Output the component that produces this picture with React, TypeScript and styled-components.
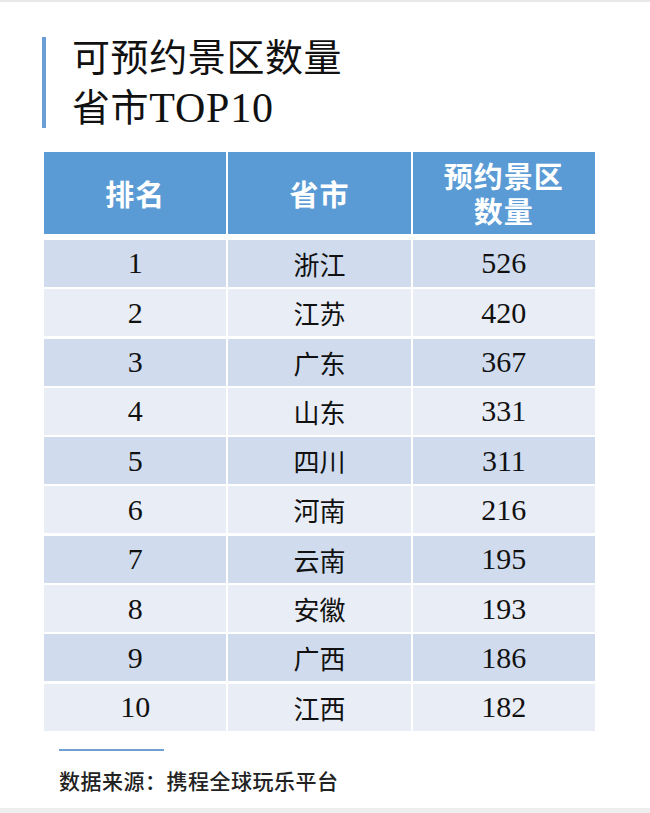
import React from "react";
import styled, { createGlobalStyle } from "styled-components";

const GlobalStyle = createGlobalStyle`
  html, body { margin: 0; padding: 0; background: #ffffff; }
  * { box-sizing: border-box; }
`;

const Page = styled.div`
  width: 650px;
  height: 813px;
  display: flex;
  flex-direction: column;
  border-top: 2px solid #e8e8e8;
  background: #ffffff;
  overflow: hidden;
`;

const TitleBlock = styled.div`
  margin: 35px 0 0 42px;
  height: 91px;
  border-left: 4px solid #6a9fd6;
  padding-left: 26px;
  display: flex;
  flex-direction: column;
  justify-content: center;
`;

const TitleLine = styled.div`
  font-family: "Liberation Serif", "Noto Sans CJK SC", serif;
  font-size: 38px;
  line-height: 52px;
  height: 50px;
  letter-spacing: 0.6px;
  color: #111111;
  white-space: nowrap;
  display: flex;
  align-items: center;
`;

const Latin = styled.span`
  font-size: 42px;
  letter-spacing: 0.8px;
`;

const Table = styled.div`
  margin: 24px 0 0 44px;
  width: 551px;
  display: grid;
  grid-template-columns: repeat(3, 1fr);
  column-gap: 2px;
  row-gap: 2.3px;
`;

const HeadCell = styled.div`
  height: 82px;
  margin-bottom: 3.7px;
  background: #5b9bd5;
  color: #ffffff;
  display: flex;
  flex-direction: column;
  align-items: center;
  justify-content: center;
  text-align: center;
  font-family: "Noto Sans CJK SC", sans-serif;
  font-weight: 700;
  font-size: 29px;
  line-height: 36px;
  letter-spacing: 1px;
`;

const HeadLine = styled.span`
  display: flex;
  align-items: center;
  height: 35px;
  line-height: 1;
`;

const Cell = styled.div<{ $odd: boolean; $cjk?: boolean }>`
  height: 47px;
  background: ${(p) => (p.$odd ? "#d0dcee" : "#e9edf6")};
  display: flex;
  align-items: center;
  justify-content: center;
  font-family: "Liberation Serif", "Noto Sans CJK SC", serif;
  font-size: ${(p) => (p.$cjk ? "26px" : "30px")};
  color: #111111;
`;

const Footer = styled.div`
  margin: 18px 0 0 59px;
  display: flex;
  flex-direction: column;
`;

const FooterRule = styled.div`
  width: 105px;
  height: 2px;
  background: #6fa0d2;
`;

const Source = styled.div`
  margin-top: 16px;
  font-family: "Noto Sans CJK SC", sans-serif;
  font-size: 21px;
  line-height: 26px;
  font-weight: 500;
  letter-spacing: 0.5px;
  color: #222222;
`;

const BottomBand = styled.div`
  margin-top: auto;
  height: 5px;
  background: #eeeeee;
`;

const rows: [string, string, string][] = [
  ["1", "浙江", "526"],
  ["2", "江苏", "420"],
  ["3", "广东", "367"],
  ["4", "山东", "331"],
  ["5", "四川", "311"],
  ["6", "河南", "216"],
  ["7", "云南", "195"],
  ["8", "安徽", "193"],
  ["9", "广西", "186"],
  ["10", "江西", "182"],
];

export default function App() {
  return (
    <>
      <GlobalStyle />
      <Page>
        <TitleBlock>
          <TitleLine>可预约景区数量</TitleLine>
          <TitleLine>
            省市<Latin>TOP10</Latin>
          </TitleLine>
        </TitleBlock>
        <Table>
          <HeadCell>排名</HeadCell>
          <HeadCell>省市</HeadCell>
          <HeadCell>
            <HeadLine>预约景区</HeadLine>
            <HeadLine>数量</HeadLine>
          </HeadCell>
          {rows.map((r, i) => (
            <React.Fragment key={r[0]}>
              <Cell $odd={i % 2 === 0}>{r[0]}</Cell>
              <Cell $odd={i % 2 === 0} $cjk>
                {r[1]}
              </Cell>
              <Cell $odd={i % 2 === 0}>{r[2]}</Cell>
            </React.Fragment>
          ))}
        </Table>
        <Footer>
          <FooterRule />
          <Source>数据来源：携程全球玩乐平台</Source>
        </Footer>
        <BottomBand />
      </Page>
    </>
  );
}
